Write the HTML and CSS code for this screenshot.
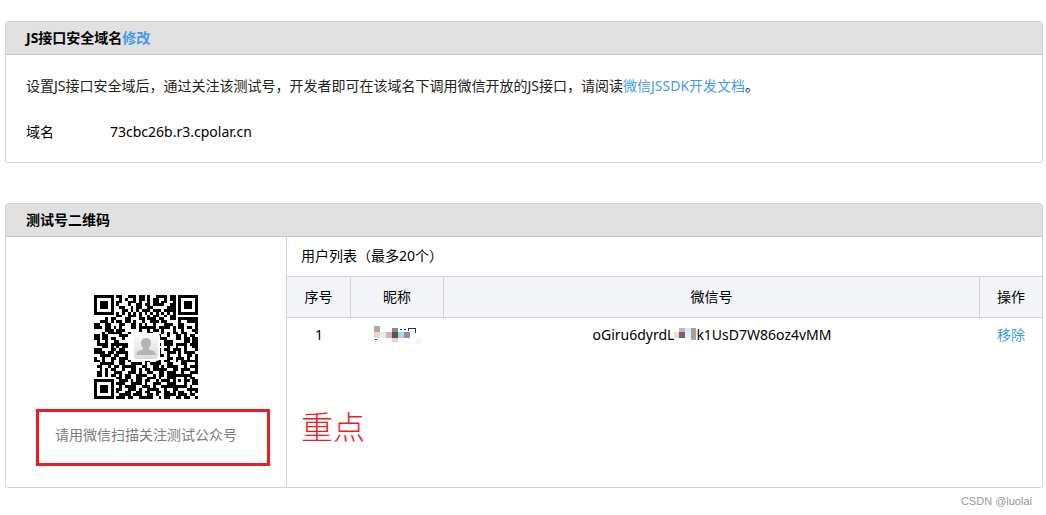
FILE: index.html
```
<!DOCTYPE html>
<html lang="zh-CN">
<head>
  <meta charset="UTF-8" />
  <meta name="viewport" content="width=device-width, initial-scale=1.0"/>
  <title>测试号管理</title>
  <link rel="stylesheet" href="styles.css">
</head>
<body>
  <section class="panel">
    <h2 class="panel-title">JS接口安全域名<a href="#edit">修改</a></h2>
    <div class="panel-body">
      <p>设置JS接口安全域后，通过关注该测试号，开发者即可在该域名下调用微信开放的JS接口，请阅读<a href="#jssdk">微信JSSDK开发文档</a>。</p>
      <dl class="domain">
        <dt>域名</dt>
        <dd>73cbc26b.r3.cpolar.cn</dd>
      </dl>
    </div>
  </section>

  <section class="panel">
    <h2 class="panel-title">测试号二维码</h2>
    <div class="qr-layout">
      <div class="qr-side">
        <svg class="qr" viewBox="0 0 104 104" role="img" aria-label="测试号二维码">
          <defs>
            <linearGradient id="badge" x1="0" y1="0" x2="0" y2="1">
              <stop offset="0" stop-color="#fafafa"/>
              <stop offset="1" stop-color="#dcdcdc"/>
            </linearGradient>
          </defs>
          <path id="qrCells" transform="scale(2.811)" shape-rendering="crispEdges"/>
          <rect x="38" y="38" width="28" height="28" rx="4" fill="#fff"/>
          <rect x="40" y="40" width="24" height="24" rx="3" fill="url(#badge)"/>
          <path d="M52 43c-3.200 0-5 2-5 5 0 2 .8 3.500 2 4.800v1.500l-4.500 1.700c-1.500.6-2 1.500-2 4h19c0-2.500-.5-3.400-2-4l-4.500-1.700v-1.500c1.200-1.300 2-2.800 2-4.800 0-3-1.800-5-5-5z" fill="#b4b4b4"/>
        </svg>
        <p class="qr-tip">请用微信扫描关注测试公众号</p>
        <div class="mark-box"></div>
      </div>

      <div class="users">
        <h3 class="users-title">用户列表（最多20个）</h3>
        <table>
          <colgroup>
            <col class="col-no">
            <col class="col-name">
            <col>
            <col class="col-action">
          </colgroup>
          <thead>
            <tr><th>序号</th><th>昵称</th><th>微信号</th><th>操作</th></tr>
          </thead>
          <tbody>
            <tr>
              <td>1</td>
              <td>
                <svg class="mask-name" viewBox="0 0 48 18" shape-rendering="crispEdges" aria-hidden="true">
                  <path d="M0 0h6v6H0z" fill="#aaa9a9"/>
                  <path d="M0 6h6v6H0z" fill="#efd6c9"/>
                  <path d="M6 6h6v6H6z" fill="#e0f0e4"/>
                  <path d="M12 6h6v6h-6z" fill="#d4adbe"/>
                  <path d="M18 2h6v4h-6z" fill="#8b8787"/>
                  <path d="M18 6h6v6h-6z" fill="#555"/>
                  <path d="M18 12h6v4h-6z" fill="#e4d5cf"/>
                  <path d="M24 6h6v6h-6z" fill="#a9d5ee"/>
                  <path d="M30 6h6v6h-6z" fill="#998a99"/>
                  <path d="M42 12h6v6h-6z" fill="#f0f8ff"/>
                  <path d="M1 13h2v1H1zM26 3h2v1h-2zM30 3h2v1h-2zM34 2h8v1h-8zM34 3h1v2h-1zM41 3h1v4h-1z" fill="#333"/>
                </svg>
              </td>
              <td>oGiru6dyrdL<svg class="mask-id" viewBox="0 0 22 12" shape-rendering="crispEdges" aria-hidden="true">
                  <path d="M0 4h5v6H0z" fill="#efdfca"/>
                  <path d="M5 0h6v4H5z" fill="#bbb"/>
                  <path d="M5 4h6v6H5z" fill="#7b6064"/>
                  <path d="M11 0h6v4h-6z" fill="#e6e6e6"/>
                  <path d="M11 4h6v6h-6z" fill="#dcf1fc"/>
                  <path d="M17 0h5v12h-5z" fill="#a0a19f"/>
                </svg>k1UsD7W86oz4vMM</td>
              <td><a href="#remove">移除</a></td>
            </tr>
          </tbody>
        </table>
        <div class="mark-text">重点</div>
      </div>
    </div>
  </section>

  <footer class="credit">CSDN @luolai</footer>
  <script src="qr.js"></script>
</body>
</html>
```
FILE: styles.css
```
* {
  margin: 0;
  padding: 0;
  box-sizing: border-box;
}

body {
  padding: 21px 3px 0 5px;
  background: #fff;
  color: #000;
  font-family: 'Noto Sans', 'Noto Sans CJK SC', sans-serif;
  font-size: 14px;
  line-height: 22px;
}

a {
  color: #459ae9;
  text-decoration: none;
}

.panel {
  border: 1px solid #d3d3d3;
  border-radius: 3px;
  margin-bottom: 40px;
}

.panel-title {
  padding: 5px 20px;
  background: #e1e1e1;
  border-bottom: 1px solid #c6c6c6;
  font-size: 14px;
  font-weight: bold;
}

.panel-body {
  padding: 20px 20px 19px;
  color: #222;
}

.domain {
  display: flex;
  margin-top: 24px;
  color: #000;
}

.domain dt {
  width: 84px;
}

.qr-layout {
  display: grid;
  grid-template-columns: 281px 1fr;
}

.qr-side {
  position: relative;
  display: flex;
  flex-direction: column;
  align-items: center;
  padding: 58px 0 41px;
  border-right: 1px solid #d3d3d3;
}

.qr {
  display: block;
  width: 104px;
  height: 104px;
}

.qr-tip {
  margin-top: 25px;
  color: #7b7b7b;
}

.mark-box {
  position: absolute;
  left: 30px;
  top: 172px;
  width: 234px;
  height: 57px;
  border: 3px solid #ed1c24;
}

.users {
  position: relative;
}

.users-title {
  padding: 8px 14px 9px;
  font-size: 14px;
  font-weight: normal;
}

table {
  width: 100%;
  table-layout: fixed;
  border-spacing: 0;
  text-align: center;
}

.col-no {
  width: 64px;
}

.col-name {
  width: 93px;
}

.col-action {
  width: 62px;
}

th {
  padding: 9px 0;
  background: #f3f4f8;
  border: solid #d3d3d3;
  border-width: 1px 1px 1px 0;
  font-weight: normal;
}

th:last-child {
  border-right: 0;
}

td {
  padding: 6px 0;
}

.mask-name {
  display: block;
  width: 48px;
  height: 18px;
  margin: 0 auto;
}

.mask-id {
  width: 22px;
  height: 12px;
}

.mark-text {
  position: absolute;
  left: 14px;
  top: 170px;
  color: #ed1c24;
  font-size: 32px;
  font-weight: 300;
  line-height: 40px;
}

.credit {
  margin-top: -36px;
  padding: 0 11px;
  color: #999;
  font-family: 'Liberation Sans', sans-serif;
  font-size: 11px;
  line-height: 18px;
  text-align: right;
}
```
FILE: qr.js
```
// one string per row, # is a dark cell
const rows = [
  '#######.##..###.##.#..####.##.#######',
  '#.....#..#.#..#.##.#.##..#.##.#.....#',
  '#.###.#.##..###.#..#.##.##..#.#.###.#',
  '#.###.#.#...#..##.##.####..##.#.###.#',
  '#.###.#..##..#.##..##.....###.#.###.#',
  '#.....#...##.#.#.###.###.####.#.....#',
  '#######.#.#.#.#.#.#.#.#.#.#.#.#######',
  '........##..###.#..#.##..#.##........',
  '....#.##...##...##.###.##..##.#######',
  '..###.#.##.##.#..#..###.##....#..####',
  '##..##...##..##.#.#..#...###..##....#',
  '###.##.#.#...##.######.####.#.##.##.#',
  '....###.###.....#..#.##.#...#..#...##',
  '...#.#####..#......##...#.#.##.##...#',
  '##.##....###..........##..#..##.#.##.',
  '##.##.##..#...........####...##.##.##',
  '.#..#..##.............#..###....##.##',
  '.####.######..........##.###.####.###',
  '...##.#.#.##..........#...#..#..#..##',
  '###...##.##...........##.##.###.#...#',
  '####.##.####..........##..###.#.####.',
  '..####.##..#..........###.#...#..##.#',
  '#..#..##.###..........#...##.###.#..#',
  '##.#..#..##.#.....##..##.##..#.######',
  '..#####..##..####.#.####..##...##...#',
  '.##..#.##.#####..##..##.#.####..#.###',
  '..#.#.##..#..##.#.##.#####..##.###..#',
  '.##.#..###..###.#..##..##.###..#..###',
  '.##.#.##.#.##..####..#.##.#########..',
  '........##.##..##..###.#..###...#.##.',
  '#######..###.#.##.##..#.###.#.#.##.##',
  '#.....#.###..####.#..###..###...#..##',
  '#.###.#..#.####..###.#..#########.#..',
  '#.###.#.##..###.#..####..#..##...####',
  '#.###.#.#..##..##.##..##.##.#.##..#.#',
  '#.....#..####.###..##.#..####.###.##.',
  '#######.###.##..#####..#.##..##.##..#'
];

let d = '';
rows.forEach((row, y) => {
  for (let x = 0; x < row.length; x++) {
    if (row[x] === '#') d += `M${x} ${y}h1v1h-1z`;
  }
});
document.getElementById('qrCells').setAttribute('d', d);
```
